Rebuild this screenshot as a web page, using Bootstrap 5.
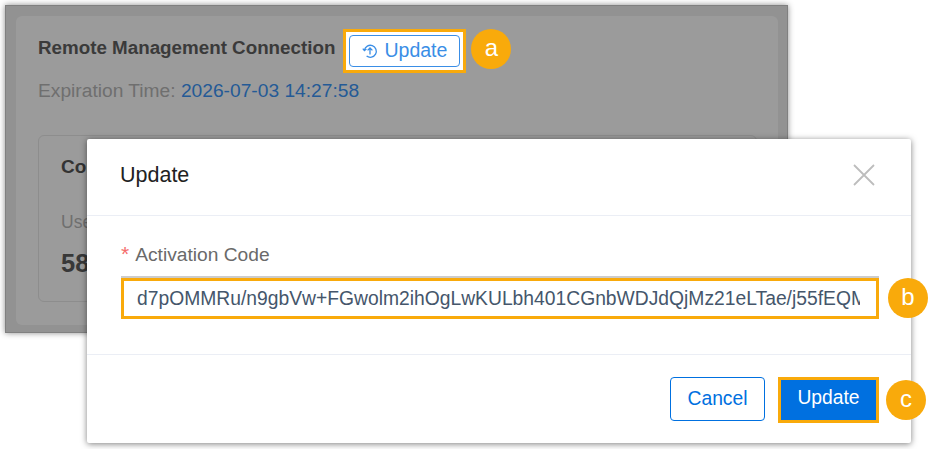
<!DOCTYPE html>
<html lang="en">
<head>
  <meta charset="UTF-8" />
  <meta name="viewport" content="width=device-width, initial-scale=1.0" />
  <title>Update Activation Code</title>
  <link href="https://cdn.jsdelivr.net/npm/bootstrap@5.3.0/dist/css/bootstrap.min.css" rel="stylesheet" />
  <style>
    body { background: #fff; font-family: "Liberation Sans", Arial, sans-serif; width: 929px; height: 449px; overflow: hidden; position: relative; }
    .shot { margin: 5px 0 0 5px; width: 783px; height: 328px; background: #929292; padding: 10px 9px 7px 10px; box-shadow: 0 0 6px rgba(0,0,0,.45); border: 1px solid #808080; }
    .shot-inner { height: 100%; background: #9b9b9b; border-radius: 6px; padding: 13px 21px 22px 22px; }
    .conn-title { font-size: 18.8px; font-weight: 700; color: #3a3a3a; margin: 0 0 6px; }
    .hl-box { border: 3px solid #f9aa0b; background: #fff; padding: 3px; margin-left: 8px; }
    .btn-top { display: flex; align-items: center; gap: 6px; height: 32px; width: 111px; padding: 0; justify-content: center; font-size: 19.5px; color: #3a8ee6; border: 1px solid #3a8ee6; border-radius: 4px; background: #fff; }
    .btn-top svg { width: 16px; height: 16px; }
    .callout { width: 40px; height: 40px; border-radius: 50%; background: #f9aa0b; color: #fff; font-size: 24px; line-height: 38px; text-align: center; flex: none; }
    .callout-a { margin: 0 0 4px 5px; }
    .expire { font-size: 19.2px; color: #6f6f6f; margin-top: 6px; line-height: 24px; }
    .expire span { color: #245a96; }
    .conn-card { width: 719px; height: 167px; margin-top: 32px; background: transparent; border: 1px solid #8d8d8d; border-radius: 6px; padding: 20px 22px; }
    .conn-card h6 { font-size: 19px; font-weight: 700; color: #333; margin: 0; line-height: 22px; }
    .conn-card p { font-size: 17.5px; color: #6f6f6f; margin: 33px 0 0; line-height: 22px; }
    .conn-card strong { display: block; font-size: 25.5px; line-height: 30px; color: #383838; margin-top: 15px; }
    .dlg { position: absolute; left: 87px; top: 139px; width: 824px; height: 304px; border: 0; border-radius: 2px; box-shadow: 0 1px 6px rgba(0,0,0,.5); background: #fff; }
    .dlg .modal-header { height: 77px; padding: 0 36px 4px 33px; border-bottom: 1px solid #ebeef5; }
    .dlg .modal-title { font-size: 21.5px; font-weight: 400; color: #222; }
    .dlg-close { background: none; border: 0; padding: 0; width: 22px; height: 22px; display: flex; }
    .dlg .modal-body { height: 138px; flex: none; padding: 27px 32px 0 34px; }
    .code-label { font-size: 19.2px; line-height: 22px; color: #6a6a6a; margin: 0 0 12px; }
    .code-label i { color: #f56c6c; font-style: normal; margin-right: 6px; font-size: 21px; }
    .code-input { border: 3px solid #f9aa0b; border-radius: 0; height: 41px; padding: 0 16px 0 13px; font-size: 19.3px; color: #45566b; box-shadow: 0 -2px 0 #ccc; }
    .dlg .modal-footer { height: 89px; padding: 0 32px 20px 0; border-top: 1px solid #ebeef5; gap: 13px; align-items: flex-end; }
    .dlg .modal-footer > * { margin: 0; }
    .btn-cancel { width: 95px; height: 44px; margin-bottom: 2px !important; padding: 0; font-size: 19.3px; color: #0070e0; background: #fff; border: 1px solid #0070e0; border-radius: 4px; }
    .btn-save { width: 101px; height: 46px; padding: 0 0 3px; font-size: 19.3px; color: #fff; background: #0070e0; border: 3px solid #f9aa0b; border-radius: 0; }
    .callout-b { position: absolute; left: 801px; top: 139px; }
    .callout-c { position: absolute; left: 799px; top: 241px; }
  </style>
</head>
<body>
  <!-- page behind the dialog -->
  <div class="shot">
    <div class="shot-inner">
      <div class="d-flex align-items-center">
        <h5 class="conn-title">Remote Management Connection</h5>
        <div class="hl-box">
          <button type="button" class="btn-top">
            <svg viewBox="0 0 16 16" fill="none" stroke="#3a8ee6" stroke-width="1.3">
              <path d="M2.4 7.2A6 6 0 1 1 4.6 13" />
              <path d="M.8 5.6 2.4 7.6 4.4 6" />
              <path d="M8 11.4V5M5.6 7.4 8 5l2.4 2.4" />
            </svg>
            Update
          </button>
        </div>
        <div class="callout callout-a">a</div>
      </div>
      <div class="expire">Expiration Time: <span>2026-07-03 14:27:58</span></div>
      <div class="card conn-card">
        <h6>Connection</h6>
        <p>Used</p>
        <strong>58</strong>
      </div>
    </div>
  </div>

  <!-- Update dialog -->
  <div class="modal-content dlg">
    <div class="modal-header">
      <h5 class="modal-title">Update</h5>
      <button type="button" class="dlg-close" aria-label="Close">
        <svg width="22" height="22" viewBox="0 0 22 22" stroke="#bdbdbd" stroke-width="1.8"><path d="M1 1 21 21M21 1 1 21" /></svg>
      </button>
    </div>
    <div class="modal-body">
      <label class="code-label d-block" for="code"><i>*</i>Activation Code</label>
      <input id="code" type="text" class="form-control code-input" value="d7pOMMRu/n9gbVw+FGwolm2ihOgLwKULbh401CGnbWDJdQjMz21eLTae/j55fEQMxPq7" />
    </div>
    <div class="modal-footer">
      <button type="button" class="btn-cancel">Cancel</button>
      <button type="button" class="btn-save">Update</button>
    </div>
    <div class="callout callout-b">b</div>
    <div class="callout callout-c">c</div>
  </div>
</body>
</html>
